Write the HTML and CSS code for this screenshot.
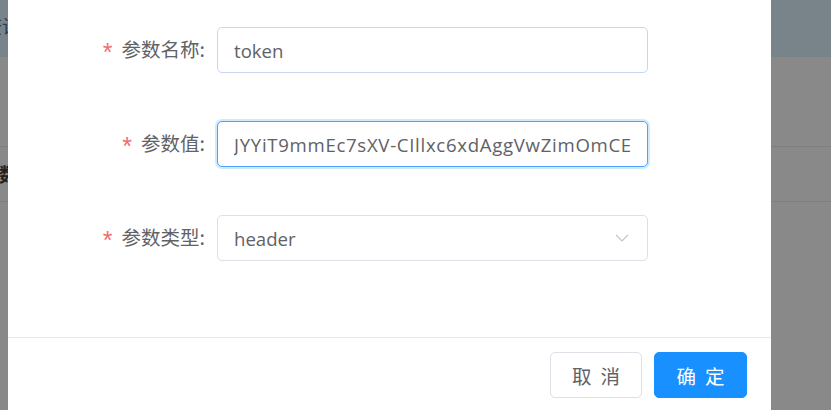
FILE: index.html
```html
<!DOCTYPE html>
<html lang="zh-CN">
<head>
  <meta charset="UTF-8">
  <meta name="viewport" content="width=device-width, initial-scale=1.0">
  <title>参数设置</title>
  <link rel="stylesheet" href="styles.css">
</head>
<body>
<div class="page">
  <div class="page-header"><span class="page-title">条件查询</span></div>
  <div class="page-row"></div>
  <div class="page-row short"><span class="page-cell">参数</span></div>
</div>

<div class="modal">
  <div class="modal-body">
    <div class="form-item">
      <label class="form-label" for="paramName"><span class="required">*</span>参数名称:</label>
      <input type="text" id="paramName" class="form-input hover" value="token">
    </div>

    <div class="form-item">
      <label class="form-label" for="paramValue"><span class="required">*</span>参数值:</label>
      <input type="text" id="paramValue" class="form-input focused" value="JYYiT9mmEc7sXV-CIllxc6xdAggVwZimOmCE">
    </div>

    <div class="form-item">
      <label class="form-label" for="paramType"><span class="required">*</span>参数类型:</label>
      <div class="form-select" id="paramType">
        <span class="select-value">header</span>
        <svg class="select-arrow" width="14" height="8" viewBox="0 0 14 8">
          <path d="M1 1 L7 7 L13 1" fill="none" stroke="#c0c4cc" stroke-width="1.2"/>
        </svg>
      </div>
    </div>
  </div>

  <div class="modal-footer">
    <button type="button" class="button btn-default"><span>取消</span></button>
    <button type="button" class="button btn-primary"><span>确定</span></button>
  </div>
</div>
</body>
</html>
```

FILE: styles.css
```css
* {
  margin: 0;
  padding: 0;
  box-sizing: border-box;
}

body {
  font-family: 'Open Sans', 'Noto Sans CJK SC', sans-serif;
  background: #898989;
  min-height: 100vh;
  overflow: hidden;
}

/* page behind the mask */
.page-header {
  height: 57px;
  background: #79838a;
  padding-top: 12px;
}

.page-title {
  display: inline-block;
  margin-left: -55px;
  font-size: 19px;
  color: #2c3e50;
}

.page-row {
  height: 90px;
  border-bottom: 1px solid #7e7e7e;
}

.page-row.short {
  height: 55px;
  display: flex;
  align-items: center;
}

.page-cell {
  margin-left: -20px;
  font-size: 19px;
  font-weight: 700;
  color: #222;
}

/* dialog */
.modal {
  position: absolute;
  top: -20px;
  left: 8px;
  width: 763px;
  height: 430px;
  background: #fff;
}

.modal-body {
  display: flex;
  flex-direction: column;
  gap: 48px;
  padding: 47px 0 76px;
}

.form-item {
  display: flex;
  align-items: center;
}

.form-label {
  width: 209px;
  padding-right: 12px;
  text-align: right;
  font-family: 'Noto Sans CJK SC', sans-serif;
  font-size: 19.5px;
  color: #606266;
}

.required {
  color: #f56c6c;
  margin-right: 9px;
  font-family: 'Liberation Sans', sans-serif;
  font-size: 25px;
  vertical-align: -4px;
}

.form-input,
.form-select {
  width: 431px;
  height: 46px;
  padding: 0 16px;
  border: 1px solid #dcdfe6;
  border-radius: 5px;
  background: #fff;
  color: #606266;
  font-family: 'Open Sans', 'Noto Sans CJK SC', sans-serif;
  font-size: 18.6px;
  outline: none;
}

.form-input.hover {
  border-color: #c6d8ee;
}

.form-input.focused {
  border-color: #4aa3ff;
  box-shadow: 0 0 0 2px rgba(24, 144, 255, 0.2);
  letter-spacing: 0.7px;
}

.form-select {
  display: flex;
  align-items: center;
  justify-content: space-between;
  padding-right: 18px;
}

.modal-footer {
  display: flex;
  justify-content: flex-end;
  gap: 12px;
  padding: 14px 24px 0;
  border-top: 1px solid #e8e8e8;
}

.button {
  width: 92px;
  height: 46px;
  border-radius: 5px;
  font-family: 'Noto Sans CJK SC', sans-serif;
  font-size: 19.5px;
  cursor: pointer;
}

.button span {
  letter-spacing: 9px;
  margin-right: -9px;
}

.btn-default {
  background: #fff;
  border: 1px solid #dcdfe6;
  color: #606266;
}

.btn-primary {
  width: 93px;
  background: #1890ff;
  border: 1px solid #1890ff;
  color: #fff;
}
```
